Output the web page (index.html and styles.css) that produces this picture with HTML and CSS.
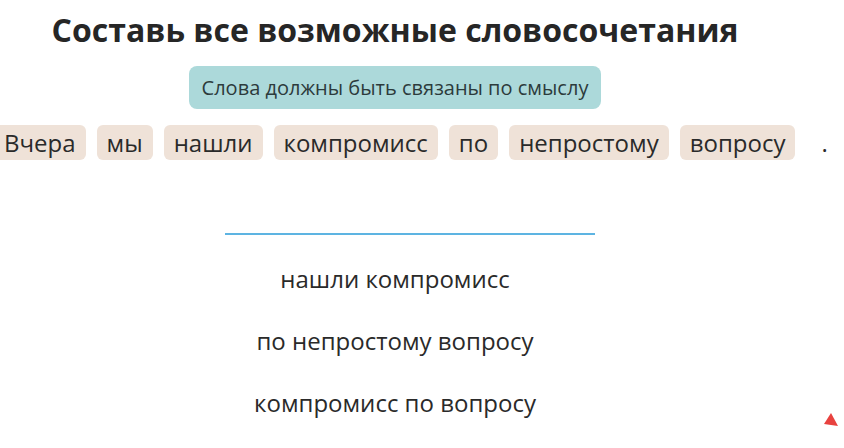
FILE: index.html
```html
<!DOCTYPE html>
<html lang="ru">
<head>
<meta charset="utf-8">
<link rel="stylesheet" href="styles.css">
</head>
<body>
<div class="page">
  <h1 class="title">Составь все возможные словосочетания</h1>
  <div class="tip-row"><div class="tip">Слова должны быть связаны по смыслу</div></div>
  <div class="words">
    <span class="chip">Вчера</span>
    <span class="chip">мы</span>
    <span class="chip">нашли</span>
    <span class="chip">компромисс</span>
    <span class="chip">по</span>
    <span class="chip">непростому</span>
    <span class="chip">вопросу</span>
    <span class="dot">.</span>
  </div>
  <div class="line-row"><div class="line"></div></div>
  <ul class="answers">
    <li>нашли компромисс</li>
    <li>по непростому вопросу</li>
    <li>компромисс по вопросу</li>
  </ul>
</div>
<svg class="corner" width="16" height="16" viewBox="0 0 16 16"><polygon points="8,1 15,14 1,12" fill="#e8423f"/></svg>
</body>
</html>
```
FILE: styles.css
```css
html, body {
  margin: 0;
  padding: 0;
  background: #ffffff;
}
body {
  font-family: "Open Sans", "Noto Sans", sans-serif;
  color: #2a2a2a;
  width: 844px;
  height: 448px;
  overflow: hidden;
  position: relative;
}
.page {
  width: 790px;
  display: flex;
  flex-direction: column;
}
.title {
  margin: 0;
  padding-top: 8px;
  font-size: 32px;
  font-weight: 700;
  line-height: 44px;
  text-align: center;
  color: #262626;
}
.tip-row {
  display: flex;
  justify-content: center;
  margin-top: 14px;
}
.tip {
  background: #acd9da;
  border-radius: 8px;
  padding: 0 13px;
  height: 43px;
  display: flex;
  align-items: center;
  font-size: 20px;
  color: #2c3b3c;
}
.words {
  display: flex;
  gap: 11px;
  margin-top: 16px;
  margin-left: -6px;
  width: 850px;
  align-items: center;
}
.chip {
  background: #efe2d8;
  border-radius: 6px;
  height: 35px;
  padding: 0 10px;
  display: flex;
  align-items: center;
  font-size: 24px;
  color: #2a2a2a;
}
.dot {
  font-size: 24px;
  margin-left: 15px;
}
.line-row {
  display: flex;
  justify-content: center;
  margin-top: 73px;
  padding-left: 30px;
}
.line {
  width: 370px;
  height: 2px;
  background: #5db4e2;
}
.answers {
  list-style: none;
  margin: 27px 0 0;
  padding: 0;
  display: flex;
  flex-direction: column;
  gap: 29px;
  text-align: center;
  font-size: 24px;
  line-height: 33px;
}
.corner {
  position: absolute;
  left: 823px;
  top: 412px;
}
```
